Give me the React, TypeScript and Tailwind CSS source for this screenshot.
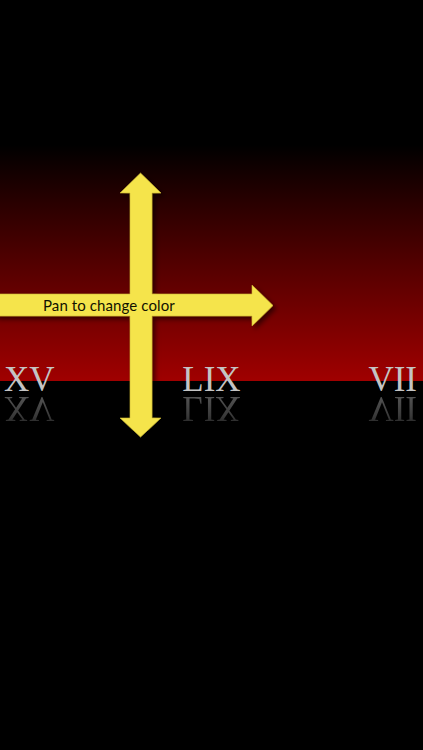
import React from "react";

const numerals = ["XV", "LIX", "VII"];

export default function App() {
  return (
    <div className="relative w-[423px] h-[750px] bg-black overflow-hidden">
      <div className="h-[145px]" />
      <div className="h-[236px] bg-[linear-gradient(to_bottom,#000000_0%,#2a0000_25%,#5a0000_55%,#a00000_100%)]" />
      <div className="mt-[-19px] flex justify-between pl-[4px] pr-[6px] font-['Liberation_Serif',serif] text-[35px] leading-none text-[#c4c4c4]">
        {numerals.map((n) => (
          <span key={n}>{n}</span>
        ))}
      </div>
      <div className="mt-[-6px] flex justify-between pl-[4px] pr-[6px] font-['Liberation_Serif',serif] text-[35px] leading-none -scale-y-100 bg-[linear-gradient(to_top,#5a5a5a_0%,#3a3a3a_70%,#222_100%)] bg-clip-text text-transparent">
        {numerals.map((n) => (
          <span key={n}>{n}</span>
        ))}
      </div>

      <svg
        className="absolute left-0 top-0"
        width="423"
        height="750"
        viewBox="0 0 423 750"
      >
        <defs>
          <filter id="sh" x="-20%" y="-20%" width="140%" height="140%">
            <feDropShadow dx="3" dy="3" stdDeviation="2.5" floodColor="#000" floodOpacity="0.55" />
          </filter>
        </defs>
        <g filter="url(#sh)" fill="#f5e44c" stroke="#c9b533" strokeWidth="0.6">
          <path d="M-5 294 H130 V193 H120 L140.5 173 L161 193 H152 V294 H252 V285 L273 305.5 L252 326 V316 H152 V418 H161 L140.5 437 L120 418 H130 V316 H-5 Z" />
        </g>
      </svg>

      <div className="absolute left-[43px] top-[295px] font-['Lato',sans-serif] text-[15px] leading-[20px] tracking-[0.1px] text-[#111100]">
        Pan to change color
      </div>
    </div>
  );
}
